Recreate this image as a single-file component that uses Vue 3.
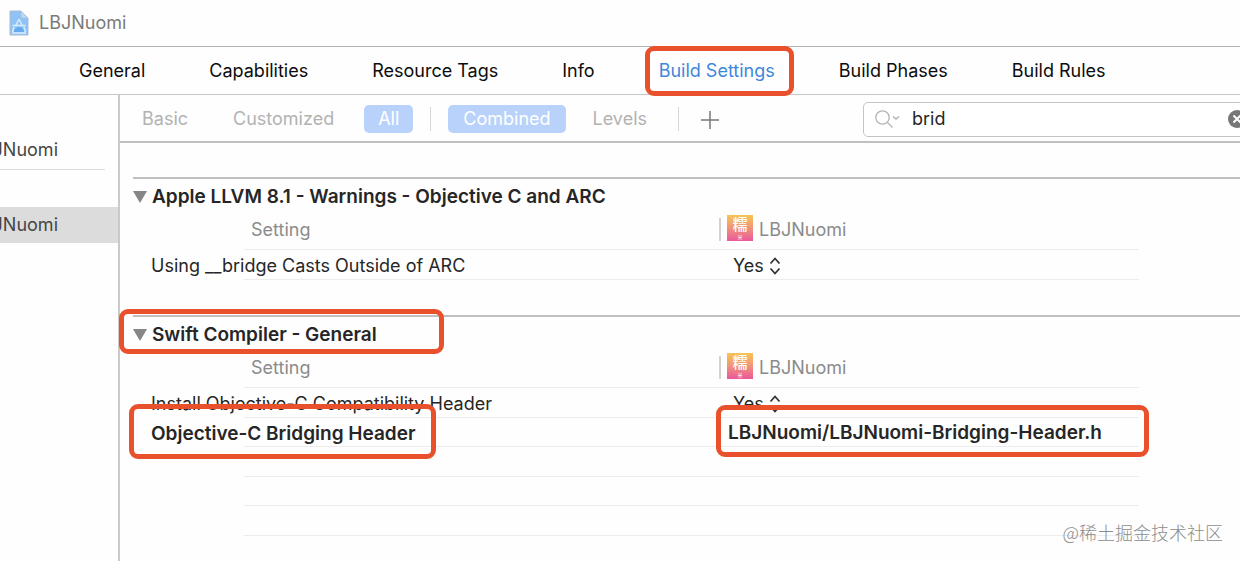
<script setup>
import { ref } from 'vue'

const tabs = ['General', 'Capabilities', 'Resource Tags', 'Info', 'Build Settings', 'Build Phases', 'Build Rules']
const activeTab = ref('Build Settings')
const query = ref('brid')

const sections = [
  {
    title: 'Apple LLVM 8.1 - Warnings - Objective C and ARC',
    rows: [{ name: 'Using __bridge Casts Outside of ARC', choice: 'Yes' }],
    blanks: 0,
  },
  {
    title: 'Swift Compiler - General',
    marked: true,
    rows: [
      { name: 'Install Objective-C Compatibility Header', choice: 'Yes' },
      { name: 'Objective-C Bridging Header', path: 'LBJNuomi/LBJNuomi-Bridging-Header.h' },
    ],
    blanks: 3,
  },
]
</script>

<template>
  <div class="window">
    <header class="titlebar">
      <svg class="doc" width="20" height="26" viewBox="0 0 20 26">
        <path d="M1 1h11l7 7v17H1z" fill="#8fc3f8" stroke="#a9bccd" />
        <path d="M12 1v7h7z" fill="#b9dafb" stroke="#a9bccd" stroke-width=".6" />
        <path d="M10 9 7 15M10 9l3 6M3.500 15.500h13M5 17l-1.500 5M15 17l1.500 5M3 23h14" fill="none" stroke="#d9edff" stroke-width="1.400" />
        <path d="M5 22a5 5 0 0 1 10 0z" fill="#66a9ec" />
      </svg>
      <span>LBJNuomi</span>
    </header>

    <nav class="tabs">
      <button
        v-for="tab in tabs"
        :key="tab"
        type="button"
        class="tab"
        :class="{ active: tab === activeTab }"
        @click="activeTab = tab"
      >{{ tab }}<i v-if="tab === 'Build Settings'" class="mark mark-tab"></i></button>
    </nav>

    <div class="body">
      <aside class="sidebar">
        <div class="group"><a href="#project" class="target">LBJNuomi</a></div>
        <a href="#target" class="target selected">LBJNuomi</a>
      </aside>

      <main class="panel">
        <div class="toolbar">
          <button type="button" class="filter basic">Basic</button>
          <button type="button" class="filter custom">Customized</button>
          <button type="button" class="filter pill">All</button>
          <span class="rule"></span>
          <button type="button" class="filter pill wide">Combined</button>
          <button type="button" class="filter levels">Levels</button>
          <span class="rule"></span>
          <button type="button" class="add" aria-label="Add build setting">
            <svg width="20" height="20" viewBox="0 0 20 20"><path d="M10 1v18M1 10h18" stroke="#777" stroke-width="1.500" /></svg>
          </button>
          <div class="search">
            <svg width="28" height="20" viewBox="0 0 28 20" fill="none" stroke="#b4b4b4" stroke-width="1.300">
              <circle cx="8.500" cy="8.500" r="6.700" />
              <path d="m13.500 13.500 5 5" />
              <path d="m19 7.500 3 2.500 3-2.500" stroke-width="1.600" />
            </svg>
            <input v-model="query" type="text" aria-label="Search build settings" />
            <button type="button" class="clear" aria-label="Clear search" @click="query = ''">
              <svg width="18" height="18" viewBox="0 0 18 18">
                <circle cx="9" cy="9" r="9" fill="#777" />
                <path d="m5.500 5.500 7 7m0-7-7 7" stroke="#fff" stroke-width="2" />
              </svg>
            </button>
          </div>
        </div>

        <section v-for="section in sections" :key="section.title" class="section">
          <h2>
            <svg width="14" height="12" viewBox="0 0 14 12"><path d="M0 0h14L7 12z" fill="#868686" /></svg>
            {{ section.title }}
            <i v-if="section.marked" class="mark mark-title"></i>
          </h2>
          <table>
            <thead>
              <tr>
                <th class="name">Setting</th>
                <th>
                  <div class="product">
                    <span class="app-icon"><b>糯</b><small>米</small></span>
                    LBJNuomi
                  </div>
                </th>
              </tr>
            </thead>
            <tbody>
              <tr v-for="row in section.rows" :key="row.name">
                <td class="name" :class="{ strong: row.path }">
                  {{ row.name }}
                  <i v-if="row.path" class="mark mark-name"></i>
                </td>
                <td v-if="row.path" class="strong path">
                  {{ row.path }}
                  <i class="mark mark-path"></i>
                </td>
                <td v-else>
                  <div class="choice">
                    <select :aria-label="row.name">
                      <option>{{ row.choice }}</option>
                      <option>No</option>
                    </select>
                    <svg width="12" height="18" viewBox="0 0 12 18" fill="none" stroke="#333" stroke-width="1.800">
                      <path d="m1.500 6.500 4.500-5 4.500 5M1.500 11.500l4.500 5 4.500-5" />
                    </svg>
                  </div>
                </td>
              </tr>
              <tr v-for="n in section.blanks" :key="n"><td></td><td></td></tr>
            </tbody>
          </table>
        </section>
      </main>
    </div>
    <div class="watermark">@稀土掘金技术社区</div>
  </div>
</template>

<style>
body {
  margin: 0;
  background: #fefefe;
}
</style>

<style scoped>
.window {
  position: relative;
  display: flex;
  flex-direction: column;
  min-height: 100vh;
  overflow: hidden;
  box-sizing: border-box;
  background: #fefefe;
  color: #262626;
  font: 18px/24px Inter, "Noto Sans CJK SC", sans-serif;
  white-space: nowrap;
}

button {
  border: 0;
  padding: 0;
  background: none;
  color: inherit;
  font: inherit;
}

svg {
  display: block;
  flex: none;
}

.titlebar {
  display: flex;
  align-items: center;
  gap: 10px;
  height: 46px;
  padding-left: 9px;
  border-bottom: 1px solid #b4b4b4;
  margin-bottom: 1px;
  color: #7b7b7b;
}

.tabs {
  display: flex;
  align-items: center;
  gap: 64px;
  height: 46px;
  padding-left: 79px;
  border-bottom: 1px solid #c8c8c8;
  color: #0c0c0c;
}

.tab {
  position: relative;
}

.tab.active {
  color: #3f87d9;
}

.mark {
  position: absolute;
  z-index: 2;
  border: 5px solid #e8512b;
  border-radius: 9px;
  pointer-events: none;
}

.mark-tab {
  inset: -13px -19px -13px -14px;
}

.body {
  display: flex;
  flex: 1;
}

.sidebar {
  width: 118px;
  flex: none;
  border-right: 2px solid #cacaca;
}

.group {
  margin-right: 13px;
  padding: 37px 0 1px;
  border-bottom: 1px solid #dcdcdc;
  margin-bottom: 37px;
}

.target {
  display: flex;
  justify-content: flex-end;
  align-items: center;
  height: 36px;
  padding-right: 60px;
  color: #454545;
  text-decoration: none;
}

.group .target {
  padding-right: 47px;
}

.selected {
  background: #dcdcdc;
}

.panel {
  flex: 1;
  min-width: 0;
}

.toolbar {
  display: flex;
  align-items: center;
  box-sizing: border-box;
  height: 48px;
  padding: 2px 0 0 22px;
  border-bottom: 2px solid #c0c0c0;
  margin-bottom: 34px;
  color: #b2b2b2;
}

.custom {
  margin: 0 30px 0 45px;
}

.pill {
  height: 28px;
  padding: 0 14px;
  border-radius: 5px;
  background: #b9d2fb;
  color: #fff;
}

.wide {
  padding: 0 15px;
}

.rule {
  width: 1px;
  height: 24px;
  margin: 0 17px;
  background: #d6d6d6;
}

.levels {
  margin: 0 14px 0 27px;
}

.add {
  margin: 1px 0 0 4px;
}

.search {
  display: flex;
  align-items: center;
  flex: 1;
  box-sizing: border-box;
  height: 35px;
  margin: 0 -13px 0 143px;
  padding: 0 6px 0 10px;
  border: 1px solid #c4c4c4;
  border-radius: 5px;
  background: #fff;
}

.search input {
  flex: 1;
  min-width: 0;
  margin-left: 10px;
  padding: 0;
  border: 0;
  outline: 0;
  background: none;
  color: #262626;
  font: inherit;
}

.section {
  margin: 0 0 35px 13px;
  border-top: 2px solid #c0c0c0;
}

h2 {
  position: relative;
  display: flex;
  align-items: center;
  gap: 5px;
  height: 36px;
  margin: 0;
  font-size: 19px;
  font-weight: 600;
}

.mark-title {
  left: -14px;
  top: -8px;
  width: 315px;
  height: 35px;
}

table {
  width: calc(100% - 101px);
  border-collapse: collapse;
  table-layout: fixed;
}

tr {
  height: 30px;
  background: linear-gradient(#ececec, #ececec) no-repeat 111px 100% / 100% 1px;
}

tr:nth-child(even) {
  height: 29px;
}

thead tr {
  height: 35px;
}

th,
td {
  position: relative;
  padding: 2px 0 0;
  font-weight: 400;
  text-align: left;
}

th {
  padding: 0 0 6px;
  color: #8b8b8b;
}

.name {
  width: 568px;
  padding-left: 18px;
}

th.name {
  width: 468px;
  padding-left: 118px;
}

.strong {
  font-size: 19px;
  font-weight: 600;
}

.path {
  padding: 0 0 0 9px;
}

.mark-name {
  left: -4px;
  top: -14px;
  width: 297px;
  height: 45px;
}

.mark-path {
  left: -3px;
  top: -13px;
  right: -10px;
  height: 42px;
}

.product {
  display: flex;
  align-items: center;
  height: 26px;
  gap: 6px;
}

.product::before {
  content: "";
  width: 2px;
  height: 23px;
  background: #d2d2d2;
}

.app-icon {
  display: flex;
  flex-direction: column;
  align-items: center;
  justify-content: space-between;
  box-sizing: border-box;
  width: 26px;
  height: 26px;
  margin-bottom: 4px;
  padding: 2px 0 1px;
  background: linear-gradient(#f5c553, #f19479 50%, #ea569c);
  color: #fff;
}

.app-icon b {
  font-size: 15px;
  font-weight: 500;
  line-height: 16px;
}

.app-icon small {
  font-size: 5px;
  line-height: 6px;
}

.choice {
  display: flex;
  align-items: center;
  gap: 6px;
  padding-left: 14px;
}

select {
  appearance: none;
  width: 30px;
  padding: 0;
  border: 0;
  background: none;
  color: inherit;
  font: inherit;
}

.watermark {
  position: absolute;
  right: 17px;
  bottom: 15px;
  height: 36px;
  color: #8d8d8d;
  font: 300 18px/24px "Noto Sans CJK SC", sans-serif;
}
</style>
